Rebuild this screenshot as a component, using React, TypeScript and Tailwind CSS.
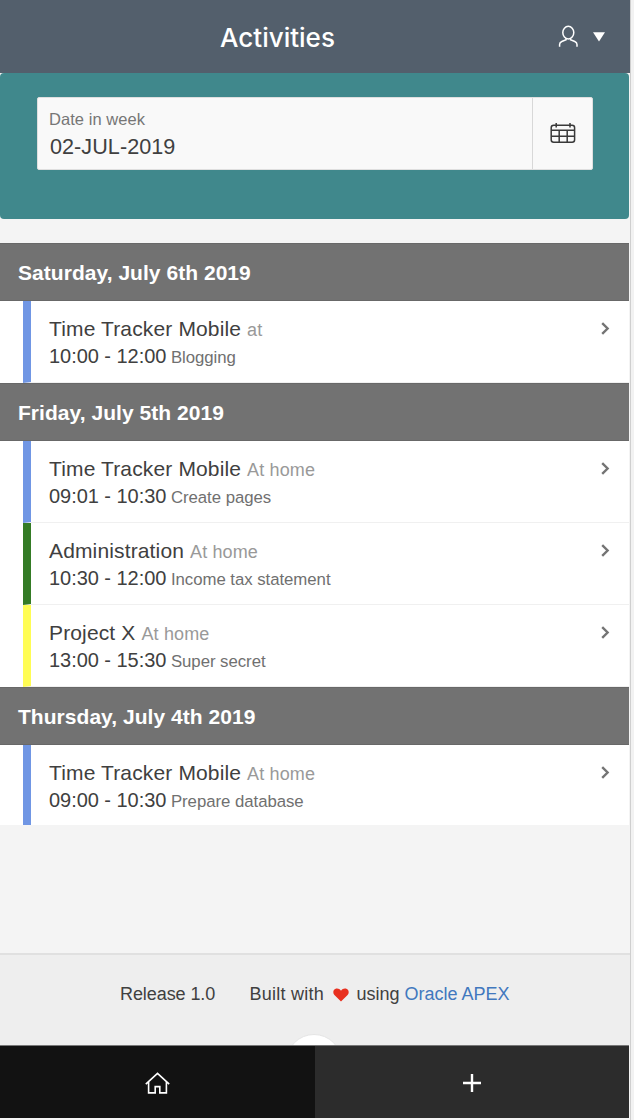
type Activity = {
  project: string;
  location: string;
  time: string;
  note: string;
  color: string;
};

type Day = {
  title: string;
  activities: Activity[];
};

const days: Day[] = [
  {
    title: "Saturday, July 6th 2019",
    activities: [
      {
        project: "Time Tracker Mobile",
        location: "at",
        time: "10:00 - 12:00",
        note: "Blogging",
        color: "border-l-[#7096e4]",
      },
    ],
  },
  {
    title: "Friday, July 5th 2019",
    activities: [
      {
        project: "Time Tracker Mobile",
        location: "At home",
        time: "09:01 - 10:30",
        note: "Create pages",
        color: "border-l-[#7096e4]",
      },
      {
        project: "Administration",
        location: "At home",
        time: "10:30 - 12:00",
        note: "Income tax statement",
        color: "border-l-[#347b25]",
      },
      {
        project: "Project X",
        location: "At home",
        time: "13:00 - 15:30",
        note: "Super secret",
        color: "border-l-[#fffd54]",
      },
    ],
  },
  {
    title: "Thursday, July 4th 2019",
    activities: [
      {
        project: "Time Tracker Mobile",
        location: "At home",
        time: "09:00 - 10:30",
        note: "Prepare database",
        color: "border-l-[#7096e4]",
      },
    ],
  },
];

function Header() {
  return (
    <header className="relative flex h-[73px] w-[630px] items-center justify-center bg-[#535f6c]">
      <h1 className="mt-[3px] mr-[75px] font-[Inter,sans-serif] text-[26px] leading-8 font-medium text-white">
        Activities
      </h1>
      <button className="absolute top-[25px] left-[558px] flex items-center text-white">
        <svg width="21" height="23" viewBox="0 0 21 23" fill="none" stroke="currentColor" strokeWidth="1.5">
          <ellipse cx="10.3" cy="7.6" rx="5.5" ry="6.3" />
          <path d="M1.6 21.8v-2.2q0-2.2 2.2-3.1l4.3-1.7v-1.9M19 21.8v-2.2q0-2.2-2.2-3.1l-4.3-1.7v-1.9" />
        </svg>
        <svg className="ml-[14px]" width="12" height="10" viewBox="0 0 12 10" fill="currentColor">
          <path d="M0 .3h12L6 9.6z" />
        </svg>
      </button>
    </header>
  );
}

function DateField() {
  return (
    <section className="h-[146px] w-[629px] rounded-[4px] bg-[#40888c] px-[37px] pt-6">
      <div className="flex h-[73px] w-[556px] rounded-[2px] border border-[#dfdfdf] bg-[#f9f9f9]">
        <label className="flex-1 pt-[11px] pl-[11px]">
          <span className="block text-[16.5px] leading-5 tracking-[0.05px] text-[#767676]">Date in week</span>
          <span className="mt-[6px] block pl-px text-[21.6px] leading-6 tracking-[0.05px] text-[#404040]">
            02-JUL-2019
          </span>
        </label>
        <button className="flex w-[60px] items-center justify-center border-l border-[#d8d8d8] text-[#393939]">
          <svg className="mb-[2px]" width="26" height="22" viewBox="0 0 26 22" fill="none" stroke="currentColor" strokeWidth="1.5">
            <rect x="1.2" y="3.2" width="23.4" height="17" rx="2.5" />
            <path d="M1.2 8.2h23.4M1.2 14.2h23.4M9.2 8.2v12M17.2 8.2v12M6.2 1v4.5M20 1v4.5" />
          </svg>
        </button>
      </div>
    </section>
  );
}

function ActivityRow({ activity }: { activity: Activity }) {
  return (
    <li className="flex h-[82px] bg-white pl-[23px]">
      <div
        className={`flex flex-1 justify-between border-b border-l-8 border-b-[#f0f0f0] pt-[14px] pr-[19px] pl-[18px] ${activity.color}`}
      >
        <div className="text-[#404040]">
          <p className="h-[27px] text-[21px] leading-7 tracking-[0.14px]">
            {activity.project} <span className="text-[18px] text-[#999]">{activity.location}</span>
          </p>
          <p className="text-[20px] leading-7 tracking-[-0.04px]">
            {activity.time} <span className="-ml-px text-[16.8px] text-[#707070]">{activity.note}</span>
          </p>
        </div>
        <svg className="mt-[7px]" width="9" height="13" viewBox="0 0 9 13" fill="none" stroke="#747474" strokeWidth="2.4">
          <path d="M1.2 1.2l5.4 5.3-5.4 5.3" />
        </svg>
      </div>
    </li>
  );
}

function ActivityList() {
  return (
    <main className="mt-6 h-[710px] w-[629px]">
      {days.map((day) => (
        <section key={day.title} className="last:h-[138px] last:overflow-hidden">
          <h2 className="flex h-[58px] items-center border-y border-[#686868] bg-[#727272] pt-[2px] pl-[18px] text-[21px] font-bold tracking-[0.04px] text-white">
            {day.title}
          </h2>
          <ul>
            {day.activities.map((activity) => (
              <ActivityRow key={activity.time} activity={activity} />
            ))}
          </ul>
        </section>
      ))}
    </main>
  );
}

function Footer() {
  return (
    <footer className="relative h-[92px] w-[630px] overflow-hidden border-t-2 border-[#e0e0e0] bg-[#eeeeee] text-[18px] text-[#404040]">
      <p className="flex h-[79px] items-center pl-[120px] whitespace-pre">
        <span className="w-[129.5px] tracking-[-0.08px]">Release 1.0</span>
        <span className="w-[75px] tracking-[0.25px]">Built with</span>
        <svg className="mr-2 ml-[8px]" width="16" height="14" viewBox="0 0 16 14" fill="#e8301f">
          <path d="M8 13.5L1.4 7C-.4 5 .1 2 2.2.9 4.2-.1 6.6.6 8 2.8 9.4.6 11.8-.1 13.8.9c2.1 1.1 2.6 4.1.8 6.1z" />
        </svg>
        <span>using </span>
        <a className="text-[#4178be]">Oracle APEX</a>
      </p>
      <div className="absolute top-[79px] left-[286px] size-[56px] rounded-full border border-[#e5e5e5] bg-white" />
    </footer>
  );
}

function NavBar() {
  return (
    <nav className="flex h-[73px] w-[629px] border-t border-[#777] text-white">
      <button className="flex w-[315px] items-center justify-center bg-[#121212] pt-px">
        <svg width="25" height="22" viewBox="0 0 25 22" fill="none" stroke="currentColor" strokeWidth="1.6">
          <path d="M.8 12.2L12.5 1.3l11.7 10.9M3.6 9.8v11.1h6.6v-6.3h4.6v6.3h6.6V9.8" />
        </svg>
      </button>
      <button className="flex flex-1 items-center justify-center bg-[#2c2c2c] pt-px">
        <svg width="18" height="18" viewBox="0 0 18 18" stroke="currentColor" strokeWidth="2.4">
          <path d="M9 0v18M0 9h18" />
        </svg>
      </button>
    </nav>
  );
}

export default function App() {
  return (
    <div className="flex h-[1120px] w-[634px] overflow-hidden bg-[#f4f4f4] font-['Liberation_Sans',Arial,sans-serif]">
      <div className="h-[1118px] w-[630px] shrink-0 bg-[#f4f4f4]">
        <Header />
        <DateField />
        <ActivityList />
        <Footer />
        <NavBar />
      </div>
      <div className="h-full flex-1 border-l border-[#cfcfcf] bg-[#f2f2f2]" />
    </div>
  );
}
